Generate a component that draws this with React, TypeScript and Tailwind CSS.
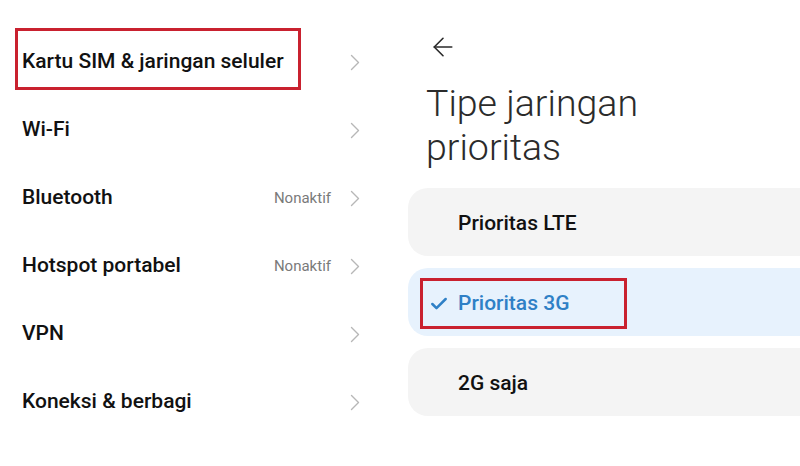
import { ArrowLeft, Check } from 'lucide-react'

type Row = { label: string; value?: string; marked?: boolean }

const rows: Row[] = [
  { label: 'Kartu SIM & jaringan seluler', marked: true },
  { label: 'Wi-Fi' },
  { label: 'Bluetooth', value: 'Nonaktif' },
  { label: 'Hotspot portabel', value: 'Nonaktif' },
  { label: 'VPN' },
  { label: 'Koneksi & berbagi' },
]

const options = [
  { label: 'Prioritas LTE' },
  { label: 'Prioritas 3G', selected: true },
  { label: '2G saja' },
]

function Chevron() {
  return (
    <svg width="10" height="17" viewBox="0 0 10 17" fill="none" className="text-[#b7b7b7]">
      <polyline points="1.5,1.5 8.5,8.5 1.5,15.5" stroke="currentColor" strokeWidth="1.4" strokeLinecap="round" strokeLinejoin="round" />
    </svg>
  )
}

export default function App() {
  return (
    <div className="flex h-[466px] w-[800px] overflow-hidden bg-white font-['Roboto',sans-serif] text-[#111]">
      <section className="flex w-[400px] shrink-0 flex-col pt-[28px]">
        {rows.map((row) => (
          <div key={row.label} className="flex h-[68px] items-center pl-[22px] pr-[40px]">
            <span className="relative text-[21px] font-medium">
              {row.label}
              {row.marked && (
                // red annotation box over the first row
                <span className="pointer-events-none absolute -left-[7px] -right-[17px] -top-[18px] -bottom-[12px] border-[3px] border-[#c9212f]" />
              )}
            </span>
            <div className="ml-auto flex items-center gap-[19px]">
              {row.value && <span className="text-[15px] text-[#7a7a7a]">{row.value}</span>}
              <Chevron />
            </div>
          </div>
        ))}
      </section>

      <section className="flex flex-1 flex-col pt-[32px]">
        <ArrowLeft className="ml-[28px] h-[30px] w-[30px] text-[#2a2a2a]" strokeWidth={1.3} />
        <h1 className="mt-[19px] pl-[26px] text-[37.5px] font-light leading-[44px] text-[#2b2b2b]">
          Tipe jaringan
          <br />
          prioritas
        </h1>
        <div className="mt-[19px] flex flex-col gap-[12px] pl-[8px]">
          {options.map((opt) => (
            <div
              key={opt.label}
              className={
                opt.selected
                  ? 'flex h-[68px] items-center rounded-l-[20px] bg-[#e7f2fd] pl-[50px] pt-[3px]'
                  : 'flex h-[68px] items-center rounded-l-[20px] bg-[#f4f4f4] pl-[50px] pt-[3px]'
              }
            >
              {opt.selected ? (
                <span className="relative flex items-center text-[21px] font-medium text-[#2f80c6]">
                  <Check className="absolute -left-[29px] h-[20px] w-[20px]" strokeWidth={3} />
                  {opt.label}
                  <span className="pointer-events-none absolute -left-[38px] -right-[58px] -top-[10px] -bottom-[10px] border-[3px] border-[#c9212f]" />
                </span>
              ) : (
                <span className="text-[21px] font-medium text-[#111]">{opt.label}</span>
              )}
            </div>
          ))}
        </div>
      </section>
    </div>
  )
}
